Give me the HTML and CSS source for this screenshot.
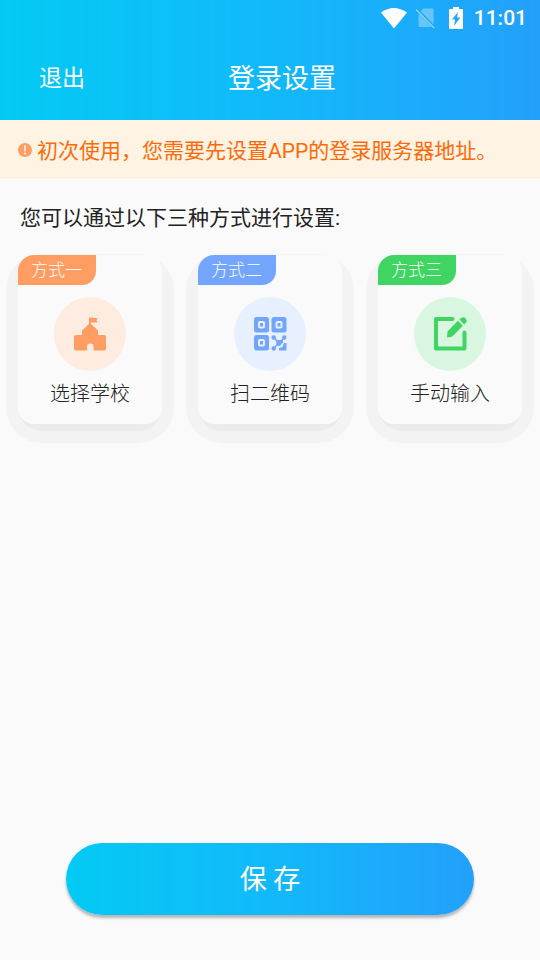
FILE: index.html
```html
<!DOCTYPE html>
<html lang="zh-CN">
<head>
<meta charset="utf-8">
<meta name="viewport" content="width=device-width, initial-scale=1">
<title>登录设置</title>
<link rel="stylesheet" href="styles.css">
</head>
<body>
<div class="page">
  <header class="header">
    <div class="status">
      <svg class="status-wifi" viewBox="0 0 26 20" aria-hidden="true"><path d="M0 4.500Q13-4.500 26 4.500L13 20.500Z" fill="#fff"/></svg>
      <svg class="status-sim" viewBox="0 0 20 22" aria-hidden="true"><path d="M7 1.500H17.500V17.500L4.800 4.200ZM2.500 6.500L15.500 20H2.500Z" fill="#fff" opacity=".33"/><path d="M0 2.500L18 21" stroke="#fff" stroke-width="1.300" opacity=".5"/></svg>
      <svg class="status-battery" viewBox="0 0 14 22" aria-hidden="true"><path fill-rule="evenodd" d="M4 0H10V2H13Q14 2 14 3V21Q14 22 13 22H1Q0 22 0 21V3Q0 2 1 2H4ZM9 5L3 12.500H6.200L5 19L11.300 10.500H8Z" fill="#fff"/></svg>
      <span class="clock">11:01</span>
    </div>
    <div class="bar">
      <button class="exit" type="button">退出</button>
      <h1 class="title">登录设置</h1>
    </div>
  </header>

  <p class="notice">
    <svg class="notice-icon" viewBox="0 0 14 14" aria-hidden="true"><circle cx="7" cy="7" r="7" fill="#ff9e63"/><path d="M6 2.500H8L7.700 8.500H6.300Z" fill="#fff3e3"/><circle cx="7" cy="10.500" r="1.100" fill="#fff3e3"/></svg>
    <span class="notice-text">初次使用，您需要先设置APP的登录服务器地址。</span>
  </p>

  <main class="main">
    <h2 class="heading">您可以通过以下三种方式进行设置:</h2>
    <div class="options">
      <button class="option orange" type="button">
        <span class="card">
          <span class="tag">方式一</span>
          <span class="disc">
            <svg class="icon" viewBox="0 0 34 34" aria-hidden="true"><path fill="currentColor" d="M16 7V0.500H20L20.500 1H24.500L23.500 3.200L24.500 5.500H18V7L25 13.500V18H31Q33 18 33 20V31.500Q33 33.500 31 33.500H20.500V29.500Q20.500 26.500 17.300 26.500Q14 26.500 14 29.500V33.500H3Q1 33.500 1 31.500V20Q1 18 3 18H9V13.500Z"/></svg>
          </span>
          <span class="label">选择学校</span>
        </span>
      </button>
      <button class="option blue" type="button">
        <span class="card">
          <span class="tag">方式二</span>
          <span class="disc">
            <svg class="icon" viewBox="0 0 34 34" aria-hidden="true">
              <g fill="currentColor"><rect x="1" y="0" width="15" height="15.500" rx="2.500"/><rect x="18.500" y="0" width="15" height="15.500" rx="2.500"/><rect x="1" y="18" width="15" height="15.500" rx="2.500"/></g>
              <g fill="none" stroke="#e6f0ff" stroke-width="2"><rect x="6" y="5" width="5" height="5.500" rx="1"/><rect x="23.500" y="5" width="5" height="5.500" rx="1"/><rect x="6" y="23" width="5" height="5.500" rx="1"/></g>
              <g fill="currentColor"><circle cx="20.700" cy="20.500" r="2.200"/><circle cx="31.300" cy="20.500" r="2.200"/><circle cx="20.700" cy="31.500" r="2.200"/><path d="M23 23H30V25.500L27 29L23.500 28.500Z"/><path d="M33.500 26V33.500H26V31L29.500 30L31 26Z"/></g>
              <path d="M20.500 20L24 24M31 21L27 25M21 31L24 28" stroke="currentColor" stroke-width="1.500"/>
            </svg>
          </span>
          <span class="label">扫二维码</span>
        </span>
      </button>
      <button class="option green" type="button">
        <span class="card">
          <span class="tag">方式三</span>
          <span class="disc">
            <svg class="icon" viewBox="0 0 34 34" aria-hidden="true"><path d="M19.500 2H3V31.500H31.500V15.500" fill="none" stroke="currentColor" stroke-width="4" stroke-linecap="round" stroke-linejoin="round"/><path fill="currentColor" d="M25 3.700L29.800 8.700L19.500 19.500L14 20.500L14.500 14.500ZM26.300 2.500L28 .9Q30.500-.8 32.700 1.500Q34.500 3.700 33 5.700L31.200 7.400Z"/></svg>
          </span>
          <span class="label">手动输入</span>
        </span>
      </button>
    </div>
  </main>

  <footer class="footer">
    <button class="save" type="button">保 存</button>
  </footer>
</div>
</body>
</html>
```
FILE: styles.css
```css
* {
  box-sizing: border-box;
}

body {
  margin: 0;
  background: #fafafa;
  color: #222;
  font-family: Roboto, "Noto Sans CJK SC", sans-serif;
}

button {
  border: 0;
  padding: 0;
  background: none;
  color: inherit;
  font: inherit;
  cursor: pointer;
}

h1, h2, p {
  margin: 0;
  font-weight: 400;
}

svg {
  display: block;
  flex: none;
}

.page {
  min-height: 100vh;
  display: flex;
  flex-direction: column;
}

.header,
.save {
  background: linear-gradient(90deg, #03caf4, #12b9fa 50%, #23a0fb);
  color: #fff;
}

.status {
  height: 36px;
  padding-right: 13px;
  display: flex;
  align-items: center;
  justify-content: flex-end;
}

.status-wifi {
  width: 26px;
  height: 20px;
  margin-right: 9px;
}

.status-sim {
  width: 20px;
  height: 22px;
  margin-right: 13px;
}

.status-battery {
  width: 14px;
  height: 22px;
  margin-right: 11px;
}

.clock {
  font-size: 21px;
  font-weight: 500;
}

.bar {
  height: 84px;
  padding: 2px 15px 0 39px;
  display: grid;
  grid-template-columns: 1fr auto 1fr;
  align-items: center;
}

.exit {
  justify-self: start;
  font-size: 23px;
  line-height: 34px;
}

.title {
  font-size: 27px;
  line-height: 40px;
}

.notice {
  min-height: 59px;
  padding: 0 18px;
  display: flex;
  align-items: center;
  gap: 5px;
  background: #fff3e3;
  color: #ff6a08;
  font-size: 21px;
  line-height: 32px;
}

.notice-icon {
  width: 14px;
  height: 14px;
}

.notice-text {
  padding-top: 2px;
}

.main {
  flex: 1;
}

.heading {
  padding: 23px 20px 20px;
  font-size: 21px;
  line-height: 32px;
}

.options {
  display: grid;
  grid-template-columns: repeat(3, 1fr);
  gap: 12px;
  padding: 0 6px;
}

.option {
  position: relative;
  z-index: 0;
  padding: 1px 12px 12px;
  border-radius: 36px;
  background: #f3f3f3;
}

.card {
  position: relative;
  display: flex;
  flex-direction: column;
  align-items: center;
  margin-bottom: 7px;
  padding-bottom: 13px;
  border-radius: 16px;
  background: #fafafa;
}

/* Lower edge of the card, rounder than the card itself */
.card::after {
  content: "";
  position: absolute;
  z-index: -1;
  inset: 0 0 -7px;
  border-radius: 24px;
  background: #ebebeb;
}

.tag {
  align-self: flex-start;
  padding: 0 14px 0 13px;
  border-radius: 16px 0 14px 0;
  background: var(--accent);
  color: #fff;
  font-size: 17px;
  font-weight: 300;
  line-height: 30px;
}

.disc {
  width: 72px;
  height: 74px;
  margin: 12px 0 6px;
  display: grid;
  place-items: center;
  border-radius: 50%;
  background: var(--tint);
  color: var(--accent);
}

.icon {
  width: 34px;
  height: 34px;
}

.label {
  font-size: 20px;
  font-weight: 300;
  line-height: 34px;
}

.orange {
  --accent: #ff9d63;
  --tint: #ffece0;
}

.blue {
  --accent: #73a5ff;
  --tint: #e6f0ff;
}

.green {
  --accent: #40d463;
  --tint: #d9f7e0;
}

.footer {
  padding: 0 66px 45px;
}

.save {
  width: 100%;
  height: 72px;
  padding-bottom: 3px;
  border-radius: 36px;
  box-shadow: 0 3px 3px rgba(0, 0, 0, 0.28);
  font-size: 27px;
}
```
